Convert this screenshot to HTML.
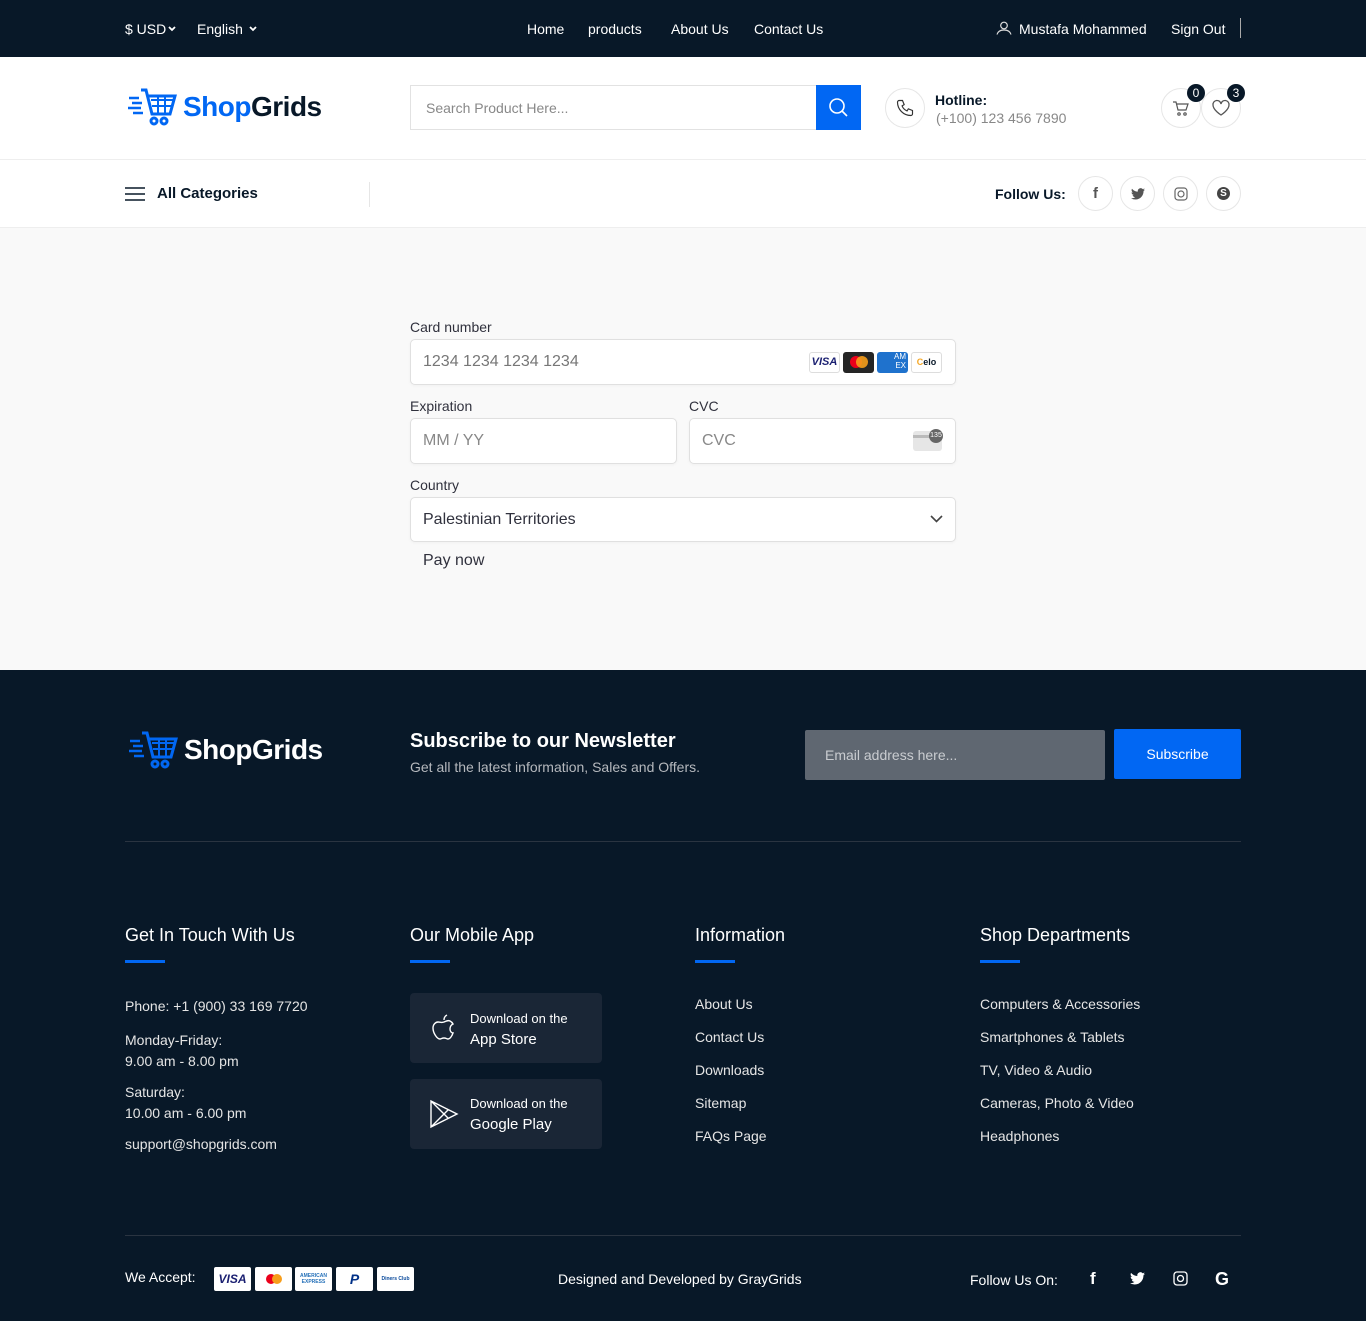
<!DOCTYPE html>
<html><head><meta charset="utf-8"><style>
*{margin:0;padding:0;box-sizing:border-box}
body{width:1366px;height:1321px;font-family:"Liberation Sans",sans-serif;background:#f9f9f9;position:relative;overflow:hidden;color:#081828}
.a{position:absolute;white-space:nowrap}
.top{position:absolute;left:0;top:0;width:1366px;height:57px;background:#081828;color:#fff;font-size:14px}
.hdr{position:absolute;left:0;top:57px;width:1366px;height:103px;background:#fff;border-bottom:1px solid #eee}
.nav{position:absolute;left:0;top:160px;width:1366px;height:68px;background:#fff;border-bottom:1px solid #eee}
.circ{position:absolute;border:1px solid #e6e6e6;border-radius:50%;display:flex;align-items:center;justify-content:center;background:#fff}
.inp{position:absolute;background:#fff;border:1px solid #e0e0e0;border-radius:5px;box-shadow:0 1px 3px rgba(0,0,0,.04);font-size:16px;color:#777;padding-left:12px;display:flex;align-items:center}
.lbl{position:absolute;font-size:14px;color:#30313d}
.foot{position:absolute;left:0;top:670px;width:1366px;height:651px;background:#081828;color:#fff}
.h4{position:absolute;font-size:18px;color:#fff}
.bar{position:absolute;width:40px;height:3px;background:#0167f3}
.ft{position:absolute;font-size:14px;color:#e5e5e5;white-space:nowrap}
.app{position:absolute;width:192px;height:70px;background:#1a2636;border-radius:4px}
.card{position:absolute;top:1267px;height:24px;width:37px;background:#fff;border-radius:2px;display:flex;align-items:center;justify-content:center;font-size:9px;font-weight:bold}
</style></head><body>
<div class="top">
<div class="a" style="left:125px;top:21px">$ USD</div>
<svg class="a" style="left:168px;top:26px" width="8" height="6" fill="none" stroke="#fff" stroke-width="1.8"><path d="M1 1l3 3 3-3"/></svg>
<div class="a" style="left:197px;top:21px">English</div>
<svg class="a" style="left:249px;top:26px" width="8" height="6" fill="none" stroke="#fff" stroke-width="1.8"><path d="M1 1l3 3 3-3"/></svg>
<div class="a" style="left:527px;top:21px">Home</div>
<div class="a" style="left:588px;top:21px">products</div>
<div class="a" style="left:671px;top:21px">About Us</div>
<div class="a" style="left:754px;top:21px">Contact Us</div>
<svg class="a" style="left:996px;top:21px" width="16" height="14" viewBox="0 0 16 14" fill="none" stroke="#ddd" stroke-width="1.2"><circle cx="8" cy="4.5" r="3.3"/><path d="M1 13.5c1-3.5 4-4.5 7-4.5s6 1 7 4.5"/></svg>
<div class="a" style="left:1019px;top:21px">Mustafa Mohammed</div>
<div class="a" style="left:1171px;top:21px">Sign Out</div>
<div class="a" style="left:1240px;top:18px;width:1px;height:20px;background:#aaa"></div>
</div>
<div class="hdr">
<svg class="a" style="left:127px;top:31px" width="50" height="40" viewBox="0 0 50 40" fill="none" stroke="#0167f3" stroke-width="3"><path d="M14 2h5l6 24h18l5-18H21"/><path d="M24 12h22M25 18h20M31 8v18M38 8v18" stroke-width="2"/><circle cx="27" cy="33" r="3"/><circle cx="37" cy="33" r="3"/><path d="M2 10h10M5 15h10M1 20h13M6 25h10" stroke-width="2.5"/></svg>
<div class="a" style="left:183px;top:34px;font-size:28px;font-weight:bold;letter-spacing:-.5px"><span style="color:#0167f3">Shop</span><span style="color:#081828">Grids</span></div>
<div class="a" style="left:410px;top:28px;width:407px;height:45px;border:1px solid #e2e2e2;font-size:14px;color:#888;padding:14px 15px">Search Product Here...</div>
<div class="a" style="left:816px;top:28px;width:45px;height:45px;background:#0167f3"><svg width="45" height="45" fill="none" stroke="#fff" stroke-width="1.6"><circle cx="21" cy="21" r="7"/><path d="M26 26l5 5"/></svg></div>
<div class="circ" style="left:885px;top:31px;width:40px;height:40px"><svg width="20" height="20" viewBox="0 0 24 24" fill="none" stroke="#333" stroke-width="1.4"><path d="M5 3h4l2 5-2.5 1.5a11 11 0 0 0 6 6L16 13l5 2v4a2 2 0 0 1-2 2A16 16 0 0 1 3 5a2 2 0 0 1 2-2z"/></svg></div>
<div class="a" style="left:935px;top:35px;font-size:14px;font-weight:bold;color:#081828">Hotline:</div>
<div class="a" style="left:936px;top:53px;font-size:14px;color:#888">(+100) 123 456 7890</div>
<div class="circ" style="left:1161px;top:31px;width:40px;height:40px"><svg width="18" height="18" viewBox="0 0 18 18" fill="none" stroke="#555" stroke-width="1.2"><path d="M1 3h3l2 8h8l2-6H5"/><circle cx="7" cy="15" r="1.2"/><circle cx="13" cy="15" r="1.2"/></svg></div>
<div class="circ" style="left:1201px;top:31px;width:40px;height:40px"><svg width="20" height="18" viewBox="0 0 20 18" fill="none" stroke="#555" stroke-width="1.3"><path d="M10 16S2 11 2 6a4 4 0 0 1 8-1 4 4 0 0 1 8 1c0 5-8 10-8 10z"/></svg></div>
<div class="a" style="left:1187px;top:27px;width:18px;height:18px;border-radius:50%;background:#081828;color:#fff;font-size:12px;text-align:center;line-height:18px">0</div>
<div class="a" style="left:1227px;top:27px;width:18px;height:18px;border-radius:50%;background:#081828;color:#fff;font-size:12px;text-align:center;line-height:18px">3</div>
</div>
<div class="nav">
<svg class="a" style="left:125px;top:27px" width="20" height="14" stroke="#081828" stroke-width="1.4"><path d="M0 1h20M0 7h20M0 13h20"/></svg>
<div class="a" style="left:157px;top:25px;font-size:15px;font-weight:bold">All Categories</div>
<div class="a" style="left:369px;top:22px;width:1px;height:25px;background:#e6e6e6"></div>
<div class="a" style="left:995px;top:26px;font-size:14px;font-weight:bold">Follow Us:</div>
<div class="circ" style="left:1078px;top:16px;width:35px;height:35px;font-weight:bold;font-size:15px;color:#555">f</div>
<div class="circ" style="left:1120px;top:16px;width:35px;height:35px"><svg width="14" height="12" viewBox="0 0 24 20"><path fill="#555" d="M24 2.4a10 10 0 0 1-2.8.8A5 5 0 0 0 23.3.4a10 10 0 0 1-3.1 1.2A4.9 4.9 0 0 0 11.8 6 14 14 0 0 1 1.7.9a4.9 4.9 0 0 0 1.5 6.6A5 5 0 0 1 1 6.9a4.9 4.9 0 0 0 3.9 4.9 5 5 0 0 1-2.2.1 4.9 4.9 0 0 0 4.6 3.4A9.9 9.9 0 0 1 0 17.3 14 14 0 0 0 7.5 19.5c9 0 14-7.5 14-14v-.6A10 10 0 0 0 24 2.4z"/></svg></div>
<div class="circ" style="left:1163px;top:16px;width:35px;height:35px"><svg width="14" height="14" fill="none" stroke="#666" stroke-width="1.2"><rect x="1" y="1" width="12" height="12" rx="3"/><circle cx="7" cy="7" r="3"/></svg></div>
<div class="circ" style="left:1206px;top:16px;width:35px;height:35px"><div style="width:13px;height:13px;border-radius:50%;background:#444;color:#fff;font-size:10px;font-weight:bold;text-align:center;line-height:13px">S</div></div>
</div>

<div class="lbl" style="left:410px;top:319px">Card number</div>
<div class="inp" style="left:410px;top:339px;width:546px;height:46px">1234 1234 1234 1234</div>
<div class="a" style="left:809px;top:352px;width:31px;height:21px;border:1px solid #ddd;border-radius:3px;background:#fff;color:#1a1f71;font-size:11px;font-weight:bold;font-style:italic;text-align:center;line-height:19px">VISA</div>
<div class="a" style="left:843px;top:352px;width:31px;height:21px;border-radius:3px;background:#252525"><div style="position:absolute;left:7px;top:4px;width:12px;height:12px;border-radius:50%;background:#eb001b"></div><div style="position:absolute;left:13px;top:4px;width:12px;height:12px;border-radius:50%;background:#f79e1b;opacity:.9"></div></div>
<div class="a" style="left:877px;top:352px;width:31px;height:21px;border-radius:3px;background:#1f72cd;color:#fff;font-size:8px;text-align:right;padding-right:2px;line-height:9px">AM<br>EX</div>
<div class="a" style="left:911px;top:352px;width:31px;height:21px;border:1px solid #ddd;border-radius:3px;background:#fff;font-size:9px;font-weight:bold;text-align:center;line-height:19px"><span style="color:#f5a623">C</span>elo</div>
<div class="lbl" style="left:410px;top:398px">Expiration</div>
<div class="inp" style="left:410px;top:418px;width:267px;height:46px;color:#888">MM / YY</div>
<div class="lbl" style="left:689px;top:398px">CVC</div>
<div class="inp" style="left:689px;top:418px;width:267px;height:46px;color:#888">CVC</div>
<div class="a" style="left:913px;top:431px;width:29px;height:20px;background:#e6e6e6;border-radius:3px"><div style="position:absolute;top:4px;left:0;width:29px;height:3px;background:#bbb"></div><div style="position:absolute;left:16px;top:-2px;width:14px;height:14px;border-radius:50%;background:#666;color:#fff;font-size:7px;text-align:center;line-height:14px">135</div></div>
<div class="lbl" style="left:410px;top:477px">Country</div>
<div class="inp" style="left:410px;top:497px;width:546px;height:45px;color:#30313d">Palestinian Territories</div>
<svg class="a" style="left:930px;top:515px" width="13" height="8" fill="none" stroke="#444" stroke-width="1.6"><path d="M1 1l5.5 5.5L12 1"/></svg>
<div class="a" style="left:423px;top:552px;font-size:16px;color:#30313d">Pay now</div>

<div class="foot">
<svg class="a" style="left:128px;top:61px" width="50" height="40" viewBox="0 0 50 40" fill="none" stroke="#0167f3" stroke-width="3"><path d="M14 2h5l6 24h18l5-18H21"/><path d="M24 12h22M25 18h20M31 8v18M38 8v18" stroke-width="2"/><circle cx="27" cy="33" r="3"/><circle cx="37" cy="33" r="3"/><path d="M2 10h10M5 15h10M1 20h13M6 25h10" stroke-width="2.5"/></svg>
<div class="a" style="left:184px;top:64px;font-size:28px;font-weight:bold;color:#fff;letter-spacing:-.5px">ShopGrids</div>
<div class="a" style="left:410px;top:60px;font-size:20px;font-weight:bold">Subscribe to our Newsletter</div>
<div class="a" style="left:410px;top:89px;font-size:14px;color:#b5b8bd">Get all the latest information, Sales and Offers.</div>
<div class="a" style="left:805px;top:60px;width:300px;height:50px;background:#5f6771;border-radius:2px;color:#c9ccd0;font-size:14px;padding:17px 20px">Email address here...</div>
<div class="a" style="left:1114px;top:59px;width:127px;height:50px;background:#0167f3;border-radius:2px;font-size:14px;text-align:center;line-height:50px">Subscribe</div>
<div class="a" style="left:125px;top:171px;width:1116px;height:1px;background:#2a3441"></div>

<div class="h4" style="left:125px;top:255px">Get In Touch With Us</div>
<div class="bar" style="left:125px;top:290px"></div>
<div class="ft" style="left:125px;top:328px">Phone: +1 (900) 33 169 7720</div>
<div class="ft" style="left:125px;top:360px;line-height:21px">Monday-Friday:<br>9.00 am - 8.00 pm</div>
<div class="ft" style="left:125px;top:412px;line-height:21px">Saturday:<br>10.00 am - 6.00 pm</div>
<div class="ft" style="left:125px;top:466px">support@shopgrids.com</div>

<div class="h4" style="left:410px;top:255px">Our Mobile App</div>
<div class="bar" style="left:410px;top:290px"></div>
<div class="app" style="left:410px;top:323px"><svg class="a" style="left:22px;top:20px" width="24" height="30" viewBox="0 0 24 30" fill="none" stroke="#fff" stroke-width="1.4"><path d="M12 9c2-1 4-2 6-1 2 1 3 3 3 3-2 1-3 3-3 5 0 3 2 4 3 4-1 3-3 6-5 6-1 0-2-1-4-1s-3 1-4 1c-3 0-7-6-7-11 0-4 3-6 5-6 2 0 3 1 6 0zM12 7c0-2 1-4 3-5"/></svg><div class="a" style="left:60px;top:18px;font-size:13px">Download on the</div><div class="a" style="left:60px;top:38px;font-size:15px">App Store</div></div>
<div class="app" style="left:410px;top:409px"><svg class="a" style="left:19px;top:20px" width="30" height="30" viewBox="0 0 30 30" fill="none" stroke="#fff" stroke-width="1.4"><path d="M2 2l26 13L2 28zM2 2l17 17M2 28l17-17"/></svg><div class="a" style="left:60px;top:17px;font-size:13px">Download on the</div><div class="a" style="left:60px;top:37px;font-size:15px">Google Play</div></div>

<div class="h4" style="left:695px;top:255px">Information</div>
<div class="bar" style="left:695px;top:290px"></div>
<div class="ft" style="left:695px;top:326px">About Us</div>
<div class="ft" style="left:695px;top:359px">Contact Us</div>
<div class="ft" style="left:695px;top:392px">Downloads</div>
<div class="ft" style="left:695px;top:425px">Sitemap</div>
<div class="ft" style="left:695px;top:458px">FAQs Page</div>

<div class="h4" style="left:980px;top:255px">Shop Departments</div>
<div class="bar" style="left:980px;top:290px"></div>
<div class="ft" style="left:980px;top:326px">Computers &amp; Accessories</div>
<div class="ft" style="left:980px;top:359px">Smartphones &amp; Tablets</div>
<div class="ft" style="left:980px;top:392px">TV, Video &amp; Audio</div>
<div class="ft" style="left:980px;top:425px">Cameras, Photo &amp; Video</div>
<div class="ft" style="left:980px;top:458px">Headphones</div>

<div class="a" style="left:125px;top:565px;width:1116px;height:1px;background:#2a3441"></div>
<div class="ft" style="left:125px;top:599px;color:#fff">We Accept:</div>
<div class="ft" style="left:558px;top:601px;color:#fff">Designed and Developed by GrayGrids</div>
<div class="ft" style="left:970px;top:602px;color:#fff">Follow Us On:</div>
<div class="a" style="left:1090px;top:599px;font-size:17px;font-weight:bold">f</div>
<svg class="a" style="left:1130px;top:602px" width="15" height="13" viewBox="0 0 24 20"><path fill="#fff" d="M24 2.4a10 10 0 0 1-2.8.8A5 5 0 0 0 23.3.4a10 10 0 0 1-3.1 1.2A4.9 4.9 0 0 0 11.8 6 14 14 0 0 1 1.7.9a4.9 4.9 0 0 0 1.5 6.6A5 5 0 0 1 1 6.9a4.9 4.9 0 0 0 3.9 4.9 5 5 0 0 1-2.2.1 4.9 4.9 0 0 0 4.6 3.4A9.9 9.9 0 0 1 0 17.3 14 14 0 0 0 7.5 19.5c9 0 14-7.5 14-14v-.6A10 10 0 0 0 24 2.4z"/></svg>
<svg class="a" style="left:1173px;top:601px" width="15" height="15" fill="none" stroke="#fff" stroke-width="1.3"><rect x="1" y="1" width="13" height="13" rx="3"/><circle cx="7.5" cy="7.5" r="3"/></svg>
<div class="a" style="left:1215px;top:599px;font-size:18px;font-weight:bold">G</div>
</div>
<div class="card" style="left:214px;color:#1a1f71;font-style:italic;font-size:12px">VISA</div>
<div class="card" style="left:255px"><div style="width:10px;height:10px;border-radius:50%;background:#eb001b"></div><div style="width:10px;height:10px;border-radius:50%;background:#f79e1b;margin-left:-4px"></div></div>
<div class="card" style="left:295px;color:#2671b9;font-size:5px;line-height:6px;text-align:center">AMERICAN<br>EXPRESS</div>
<div class="card" style="left:336px;color:#003087;font-size:14px;font-style:italic">P</div>
<div class="card" style="left:377px;color:#0a4a9c;font-size:5px">Diners Club</div>
</body></html>
